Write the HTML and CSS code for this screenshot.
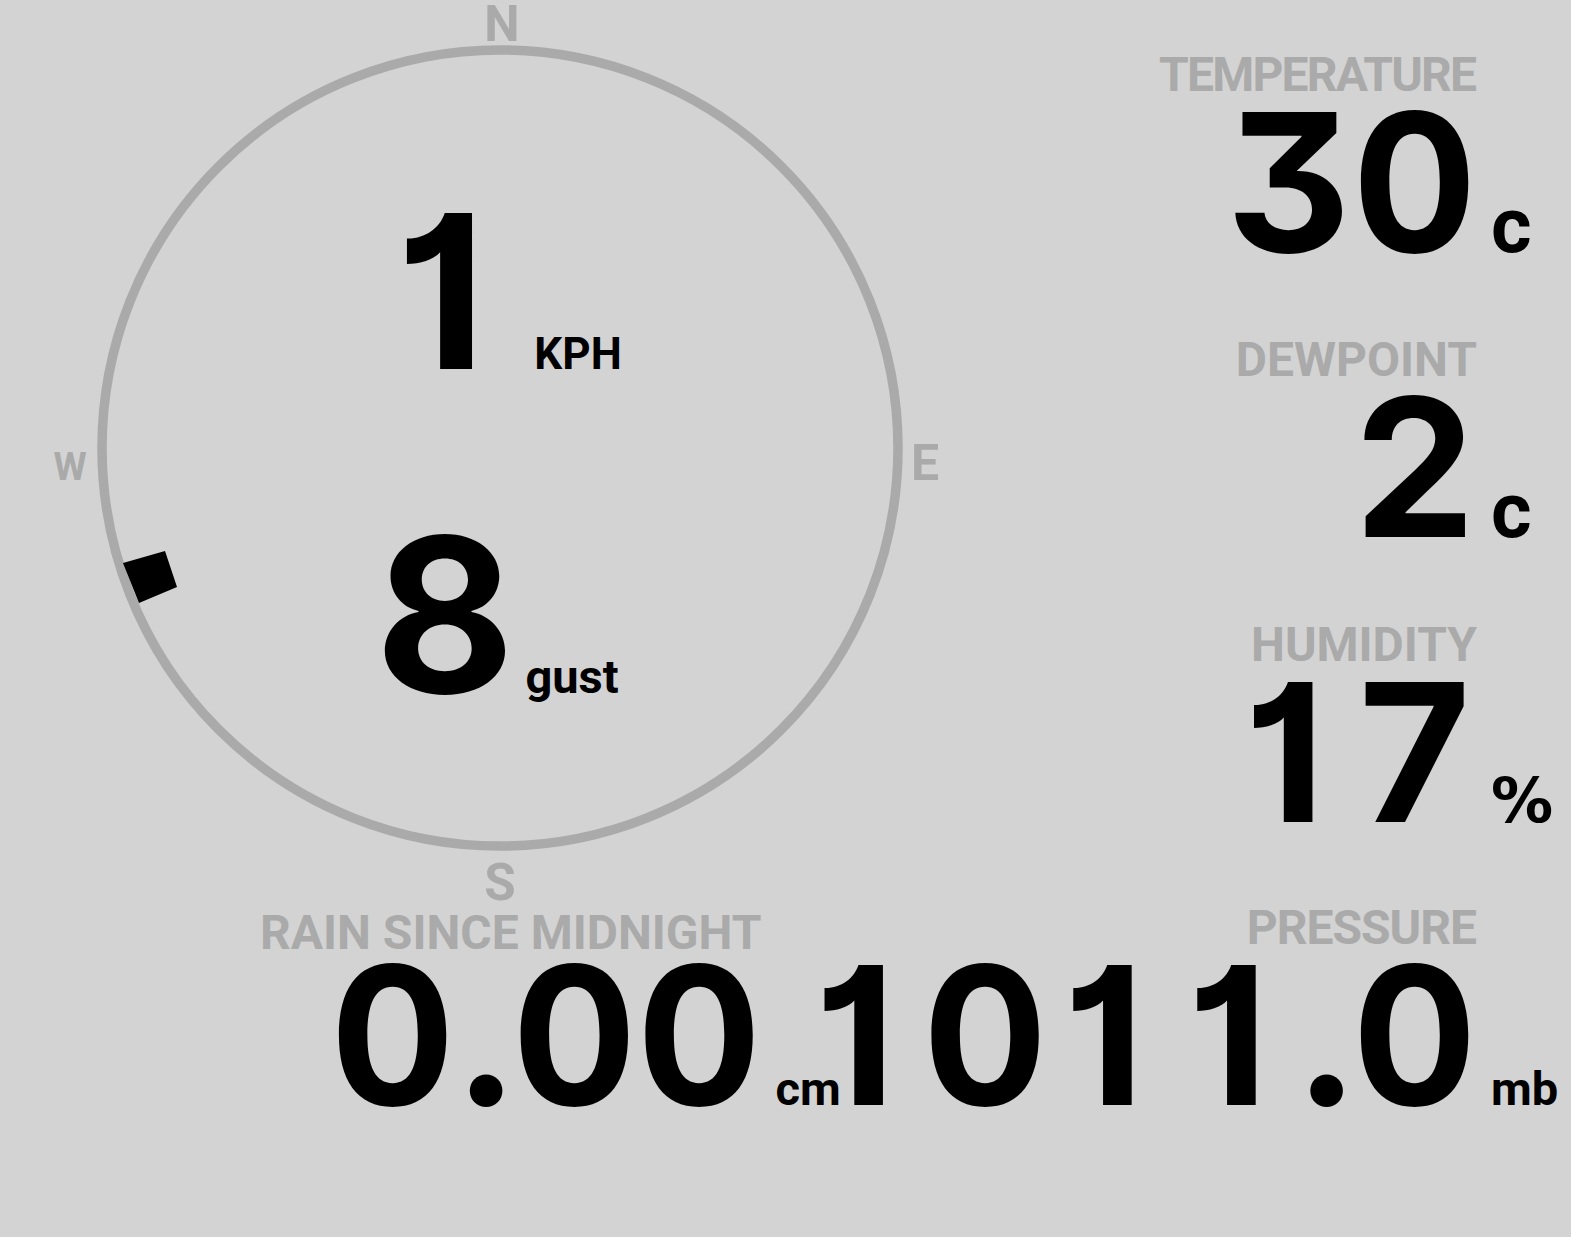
FILE: index.html
```html
<!DOCTYPE html>
<html lang="en">
<head>
<meta charset="utf-8">
<title>Weather</title>
<link rel="stylesheet" href="styles.css">
</head>
<body>
<main class="dash">
  <section class="compass">
    <svg class="compass-face" viewBox="0 0 1000 920" width="1000" height="920" aria-hidden="true">
      <circle cx="500" cy="448" r="398" fill="none" stroke="#aaaaaa" stroke-width="9.5"/>
      <text class="cardinal" x="502" y="41" text-anchor="middle" font-size="50">N</text>
      <text class="cardinal" x="911" y="480" text-anchor="start" font-size="50">E</text>
      <text class="cardinal" x="500" y="900" text-anchor="middle" font-size="51">S</text>
      <text class="cardinal" x="70" y="480" text-anchor="middle" font-size="38">W</text>
      <polygon points="123,563 165,551 177,587 139,603" fill="#000"/>
    </svg>
    <div class="speed-row">
      <span class="speed-num"><span class="one">1</span></span><span class="speed-unit">KPH</span>
    </div>
    <div class="speed-row gust-row">
      <span class="speed-num">8</span><span class="speed-unit">gust</span>
    </div>
  </section>

  <section class="readings">
    <div class="reading">
      <div class="label label-temp">TEMPERATURE</div>
      <div class="value"><span class="num">30</span><span class="unit unit-c">c</span></div>
    </div>
    <div class="reading">
      <div class="label">DEWPOINT</div>
      <div class="value"><span class="num">2</span><span class="unit unit-c">c</span></div>
    </div>
    <div class="reading">
      <div class="label">HUMIDITY</div>
      <div class="value"><span class="num"><span class="one">1</span>7</span><span class="unit unit-pct">%</span></div>
    </div>
  </section>

  <section class="bottom">
    <div class="reading rain">
      <div class="label">RAIN SINCE MIDNIGHT</div>
      <div class="value"><span class="num">0<span class="dot">.</span>00</span><span class="unit unit-small">cm</span></div>
    </div>
    <div class="reading pressure">
      <div class="label label-press">PRESSURE</div>
      <div class="value"><span class="num"><span class="one">1</span>0<span class="one">1</span><span class="one">1</span><span class="dot">.</span>0</span><span class="unit unit-small">mb</span></div>
    </div>
  </section>
</main>
</body>
</html>
```

FILE: styles.css
```css
html, body {
  margin: 0;
  padding: 0;
}

body {
  background: #d3d3d3;
  color: #000;
  font-family: Roboto, "Liberation Sans", sans-serif;
  font-weight: 700;
  width: 1571px;
  height: 1237px;
  overflow: hidden;
}

.dash {
  display: grid;
  grid-template-columns: 1000px 571px;
  grid-template-rows: 904px auto;
}

/* ---------- compass ---------- */
.compass {
  position: relative;
  display: flex;
  flex-direction: column;
  padding-top: 211px;
  box-sizing: border-box;
}

.compass-face {
  position: absolute;
  left: 0;
  top: 0;
  overflow: visible;
}

.cardinal {
  font-family: Roboto, "Liberation Sans", sans-serif;
  font-weight: 700;
  fill: #aaaaaa;
}

.speed-row {
  position: relative;
  display: flex;
  align-items: baseline;
  justify-content: center;
}

.gust-row {
  margin-top: 164px;
  padding-right: 6px;
}

.speed-num,
.num {
  font-family: Inter, Roboto, sans-serif;
  font-weight: 700;
  font-feature-settings: "tnum" 1, "cv01" 1, "cv09" 1;
}

/* digit one: plain (footless) glyph set in a tabular-width cell */
.one {
  display: inline-block;
  box-sizing: border-box;
  width: 0.642em;
  padding-right: 0.06em;
  text-align: center;
  font-feature-settings: "tnum" 0, "cv01" 1;
}

.dot {
  margin-left: 0.026em;
}

.speed-num {
  font-size: 215px;
  line-height: 160px;
}

.speed-unit {
  font-size: 44px;
  line-height: 10px;
  margin-left: 18px;
}

.gust-row .speed-unit {
  font-size: 47px;
  margin-left: 11px;
}

/* ---------- readings ---------- */
.readings {
  display: flex;
  flex-direction: column;
  gap: 79px;
  padding-top: 51px;
}

.reading {
  display: grid;
  grid-template-columns: 1fr 94px;
}

.label {
  grid-column: 1;
  text-align: right;
  font-size: 48px;
  line-height: 48px;
  color: #aaaaaa;
  margin-bottom: 8px;
  white-space: nowrap;
}

.label-temp {
  letter-spacing: -1.8px;
  margin-right: 1.8px;
}

.label-press {
  letter-spacing: -1px;
  margin-right: 1px;
}

.value {
  grid-column: 1 / span 2;
  display: grid;
  grid-template-columns: subgrid;
  align-items: baseline;
}

.num {
  text-align: right;
  font-size: 193px;
  line-height: 150px;
  white-space: nowrap;
}

.unit {
  line-height: 10px;
  padding-left: 14px;
  white-space: nowrap;
}

.unit-c {
  font-size: 78px;
}

.unit-pct {
  font-family: "DejaVu Sans", Roboto, sans-serif;
  font-size: 62px;
}

.unit-small {
  font-size: 47px;
}

/* ---------- bottom row ---------- */
.bottom {
  grid-column: 1 / span 2;
  display: grid;
  grid-template-columns: minmax(0, 1fr) auto;
}

.rain {
  grid-template-columns: auto auto;
  justify-self: start;
  margin-left: 260px;
}

.rain .label {
  margin-top: 5px;
  margin-bottom: 3px;
}

.pressure {
  grid-template-columns: auto 94px;
}
```
